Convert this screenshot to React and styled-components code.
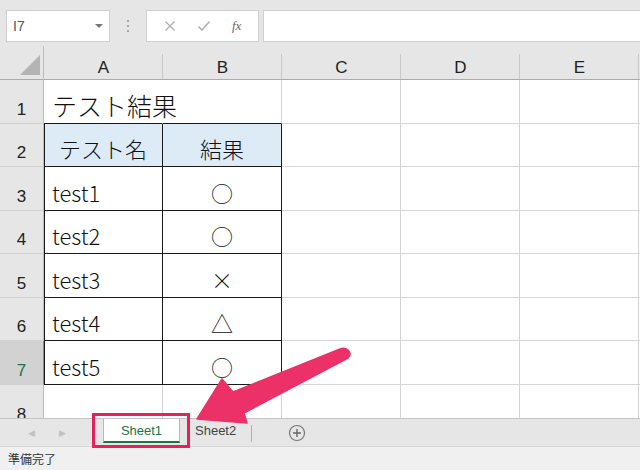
import React from "react";
import styled, { createGlobalStyle } from "styled-components";

const GlobalStyle = createGlobalStyle`
  html, body { margin: 0; padding: 0; }
  body {
    width: 640px;
    height: 470px;
    overflow: hidden;
    background: #ffffff;
    font-family: "Liberation Sans", Arial, sans-serif;
  }
`;

const Page = styled.div`
  position: relative;
  width: 640px;
  height: 470px;
  display: flex;
  flex-direction: column;
  background: #e6e6e6;
`;

const Toolbar = styled.div`
  height: 46px;
  flex-shrink: 0;
  display: flex;
  align-items: flex-start;
  padding: 10px 0 0 6px;
  box-sizing: border-box;
  gap: 4px;
`;

const NameBox = styled.div`
  width: 104px;
  height: 32px;
  box-sizing: border-box;
  background: #fff;
  border: 1px solid #d0d0d0;
  display: flex;
  align-items: center;
  justify-content: space-between;
  padding: 0 6px 0 6px;
  font-size: 14px;
  color: #555;
`;

const Caret = styled.span`
  width: 0;
  height: 0;
  border-left: 4px solid transparent;
  border-right: 4px solid transparent;
  border-top: 4px solid #777;
`;

const Grip = styled.div`
  width: 28px;
  height: 32px;
  display: flex;
  flex-direction: column;
  align-items: center;
  justify-content: center;
  gap: 3px;
  span {
    width: 2px;
    height: 2px;
    background: #a8a8a8;
  }
`;

const FormulaButtons = styled.div`
  width: 113px;
  height: 32px;
  box-sizing: border-box;
  background: #fff;
  border: 1px solid #d0d0d0;
  display: flex;
  align-items: center;
  justify-content: space-around;
  padding: 0 6px;
  color: #a6a6a6;
`;

const Fx = styled.span`
  font-family: "Liberation Serif", serif;
  font-style: italic;
  font-size: 13px;
  color: #666;
`;

const FormulaInput = styled.div`
  flex: 1;
  height: 32px;
  box-sizing: border-box;
  background: #fff;
  border: 1px solid #d0d0d0;
  border-right: none;
`;

const Sheet = styled.div`
  height: 372px;
  flex-shrink: 0;
  display: grid;
  grid-template-columns: 44px repeat(5, 119px) 1fr;
  grid-template-rows: 34px 44px 43px 44px 43px 44px 43px 44px 44px;
  background: #fff;
  overflow: hidden;
`;

const Corner = styled.div`
  background: #e6e6e6;
  border-right: 1px solid #bdbdbd;
  border-bottom: 1px solid #ababab;
  position: relative;
  &::after {
    content: "";
    position: absolute;
    right: 3px;
    bottom: 4px;
    width: 0;
    height: 0;
    border-left: 20px solid transparent;
    border-bottom: 20px solid #b4b4b4;
  }
`;

const ColHead = styled.div`
  background: #e6e6e6;
  border-bottom: 1px solid #ababab;
  display: flex;
  align-items: center;
  justify-content: center;
  padding-top: 10px;
  font-size: 17px;
  color: #222;
  position: relative;
  &::after {
    content: "";
    position: absolute;
    right: 0;
    top: 8px;
    bottom: 0;
    width: 1px;
    background: #c8c8c8;
  }
`;

const RowHead = styled.div`
  background: ${(p) => (p.$active ? "#d2d2d2" : "#e6e6e6")};
  color: ${(p) => (p.$active ? "#217346" : "#222")};
  border-right: 1px solid ${(p) => (p.$active ? "#8a8a8a" : "#bdbdbd")};
  border-bottom: 1px solid #d0d0d0;
  display: flex;
  align-items: flex-end;
  justify-content: center;
  padding-bottom: 5px;
  box-sizing: border-box;
  font-size: 17px;
  line-height: 1;
`;

const Cell = styled.div`
  box-sizing: border-box;
  border-right: 1px solid ${(p) => (p.$noRight ? "transparent" : p.$boxed ? "#1a1a1a" : "#d4d4d4")};
  border-bottom: 1px solid ${(p) => (p.$boxed || p.$topEdge ? "#1a1a1a" : "#d4d4d4")};
  box-shadow: ${(p) => (p.$leftEdge ? "inset 1px 0 0 #1a1a1a" : "none")};
  background: ${(p) => (p.$fill ? "#ddebf7" : "#fff")};
  display: flex;
  align-items: center;
  justify-content: ${(p) => (p.$center ? "center" : "flex-start")};
  padding-top: 6px;
  padding-left: ${(p) => (p.$center ? "0" : "8px")};
  font-family: "Noto Sans CJK JP", "Liberation Sans", sans-serif;
  font-weight: 300;
  font-size: ${(p) => (p.$title ? "25px" : "22px")};
  color: #111;
  white-space: nowrap;
  overflow: ${(p) => (p.$title ? "visible" : "hidden")};
  position: relative;
  z-index: ${(p) => (p.$title ? 1 : 0)};
`;

const TabBar = styled.div`
  height: 28px;
  flex-shrink: 0;
  box-sizing: border-box;
  border-top: 1px solid #c4c4c4;
  background: #e6e6e6;
  display: flex;
  align-items: stretch;
`;

const NavArrows = styled.div`
  width: 103px;
  display: flex;
  align-items: center;
  padding-left: 28px;
  gap: 24px;
  box-sizing: border-box;
  color: #c2c2c2;
  font-size: 9px;
`;

const Tab = styled.div`
  width: ${(p) => (p.$active ? "77px" : "auto")};
  box-sizing: border-box;
  padding: ${(p) => (p.$active ? "0" : "0 14px 0 14px")};
  margin-bottom: 3px;
  background: ${(p) => (p.$active ? "#fff" : "transparent")};
  border-left: 1px solid ${(p) => (p.$active ? "#b8b8b8" : "transparent")};
  border-right: 1px solid ${(p) => (p.$active ? "#b8b8b8" : "transparent")};
  border-bottom: ${(p) => (p.$active ? "2px solid #217346" : "2px solid transparent")};
  display: flex;
  align-items: center;
  justify-content: center;
  font-size: 13px;
  color: ${(p) => (p.$active ? "#217346" : "#444")};
`;

const TabDivider = styled.div`
  width: 1px;
  margin: 6px 0 4px 0;
  background: #b0b0b0;
`;

const AddSheet = styled.div`
  width: 90px;
  display: flex;
  align-items: center;
  justify-content: center;
`;

const StatusBar = styled.div`
  flex: 1;
  background: #f0f0f0;
  border-top: 1px solid #d6d6d6;
  display: flex;
  align-items: center;
  padding-left: 8px;
  font-family: "Noto Sans CJK JP", sans-serif;
  font-size: 12px;
  color: #333;
`;

const Highlight = styled.div`
  position: absolute;
  left: 92px;
  top: 413px;
  width: 98px;
  height: 35px;
  box-sizing: border-box;
  border: 3px solid #e5215c;
  pointer-events: none;
`;

const ArrowLayer = styled.svg`
  position: absolute;
  left: 0;
  top: 0;
  width: 640px;
  height: 470px;
  pointer-events: none;
`;

const cols = ["A", "B", "C", "D", "E"];

const rows = [
  { n: 1, a: "テスト結果", b: "", title: true },
  { n: 2, a: "テスト名", b: "結果", head: true },
  { n: 3, a: "test1", b: "○" },
  { n: 4, a: "test2", b: "○" },
  { n: 5, a: "test3", b: "×" },
  { n: 6, a: "test4", b: "△" },
  { n: 7, a: "test5", b: "○" },
  { n: 8, a: "", b: "" },
];

function App() {
  return (
    <Page>
      <GlobalStyle />
      <Toolbar>
        <NameBox>
          I7
          <Caret />
        </NameBox>
        <Grip>
          <span />
          <span />
          <span />
        </Grip>
        <FormulaButtons>
          <svg width="12" height="12" viewBox="0 0 12 12">
            <path d="M1.5 1.5 L10.5 10.5 M10.5 1.5 L1.5 10.5" stroke="#b0b0b0" strokeWidth="1.4" />
          </svg>
          <svg width="14" height="12" viewBox="0 0 14 12">
            <path d="M1.5 6.5 L5 10 L12.5 1.5" stroke="#b0b0b0" strokeWidth="1.6" fill="none" />
          </svg>
          <Fx>fx</Fx>
        </FormulaButtons>
        <FormulaInput />
      </Toolbar>

      <Sheet>
        <Corner />
        {cols.map((c) => (
          <ColHead key={c}>{c}</ColHead>
        ))}
        <ColHead />
        {rows.map((r) => {
          const inTable = r.n >= 2 && r.n <= 7;
          return (
            <React.Fragment key={r.n}>
              <RowHead $active={r.n === 7}>{r.n}</RowHead>
              <Cell
                $title={r.title}
                $noRight={r.title}
                $topEdge={r.title}
                $boxed={inTable}
                $leftEdge={inTable}
                $fill={r.head}
                $center={r.head}
              >
                {r.a}
              </Cell>
              <Cell $topEdge={r.title} $boxed={inTable} $fill={r.head} $center>
                {r.b}
              </Cell>
              <Cell />
              <Cell />
              <Cell />
              <Cell />
            </React.Fragment>
          );
        })}
      </Sheet>

      <TabBar>
        <NavArrows>
          <span>◀</span>
          <span>▶</span>
        </NavArrows>
        <Tab $active>Sheet1</Tab>
        <Tab>Sheet2</Tab>
        <TabDivider />
        <AddSheet>
          <svg width="18" height="18" viewBox="0 0 18 18">
            <circle cx="9" cy="9" r="7.5" fill="none" stroke="#777" strokeWidth="1.2" />
            <path d="M9 5 V13 M5 9 H13" stroke="#666" strokeWidth="1.4" />
          </svg>
        </AddSheet>
      </TabBar>

      <StatusBar>準備完了</StatusBar>

      <Highlight />
      <ArrowLayer viewBox="0 0 640 470">
        <path
          d="M197 419 L222 379 L233 392 L340 349 C347 346 353 353 348 358 L244 413 L247 423 Z"
          fill="#ec3068"
          stroke="#ec3068"
          strokeWidth="1.5"
          strokeLinejoin="round"
        />
      </ArrowLayer>
    </Page>
  );
}

export default App;
